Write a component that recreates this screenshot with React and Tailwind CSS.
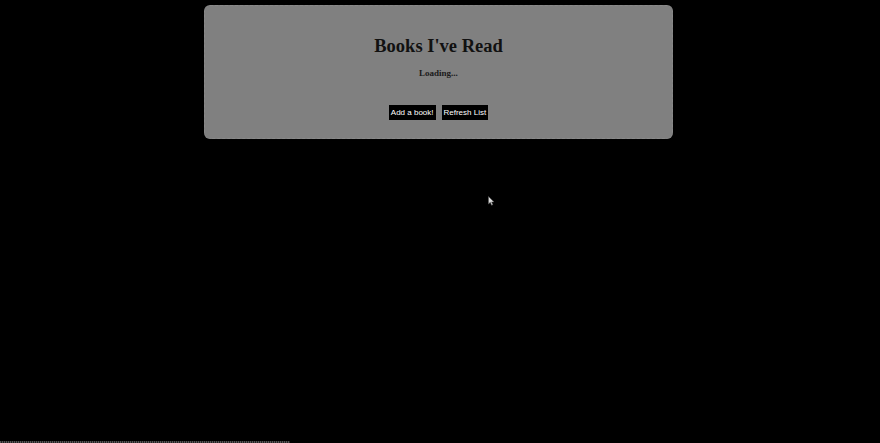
import React from 'react';

// Books list panel, still loading
export default function App() {
  return (
    <div className="relative h-[443px] w-full overflow-hidden bg-black">
      <div className="ml-[204px] mt-[5px] w-[469px] h-[134px] rounded-[6px] bg-[#808080] flex flex-col items-center border border-dashed border-[#8a8a8a]">
        <h1 className="mt-[30px] text-[18.5px] leading-[20px] font-bold text-[#111] font-['Liberation_Serif',serif]">
          Books I've Read
        </h1>
        <p className="mt-[12px] text-[9px] leading-[11px] font-bold text-[#1a1a1a] font-['Liberation_Serif',serif]">
          Loading...
        </p>
        <div className="mt-[26px] flex gap-[6px]">
          <button className="h-[15px] px-[2px] bg-black text-white text-[8px] leading-[15px] font-['Liberation_Sans',sans-serif]">
            Add a book!
          </button>
          <button className="h-[15px] px-[2px] bg-black text-white text-[8px] leading-[15px] font-['Liberation_Sans',sans-serif]">
            Refresh List
          </button>
        </div>
      </div>

      {/* mouse pointer */}
      <svg className="absolute left-[488px] top-[196px]" width="7" height="10" viewBox="0 0 7 10">
        <path d="M0.5 0.5 L0.5 8 L2.3 6.3 L3.6 9.3 L4.8 8.8 L3.6 5.9 L6 5.9 Z" fill="#ddd" stroke="#555" strokeWidth="0.5" />
      </svg>

      {/* progress strip */}
      <div className="absolute left-0 bottom-0 h-[2px] w-[290px] bg-[repeating-linear-gradient(90deg,#555_0px,#555_1px,#222_1px,#222_2px)]" />
    </div>
  );
}
